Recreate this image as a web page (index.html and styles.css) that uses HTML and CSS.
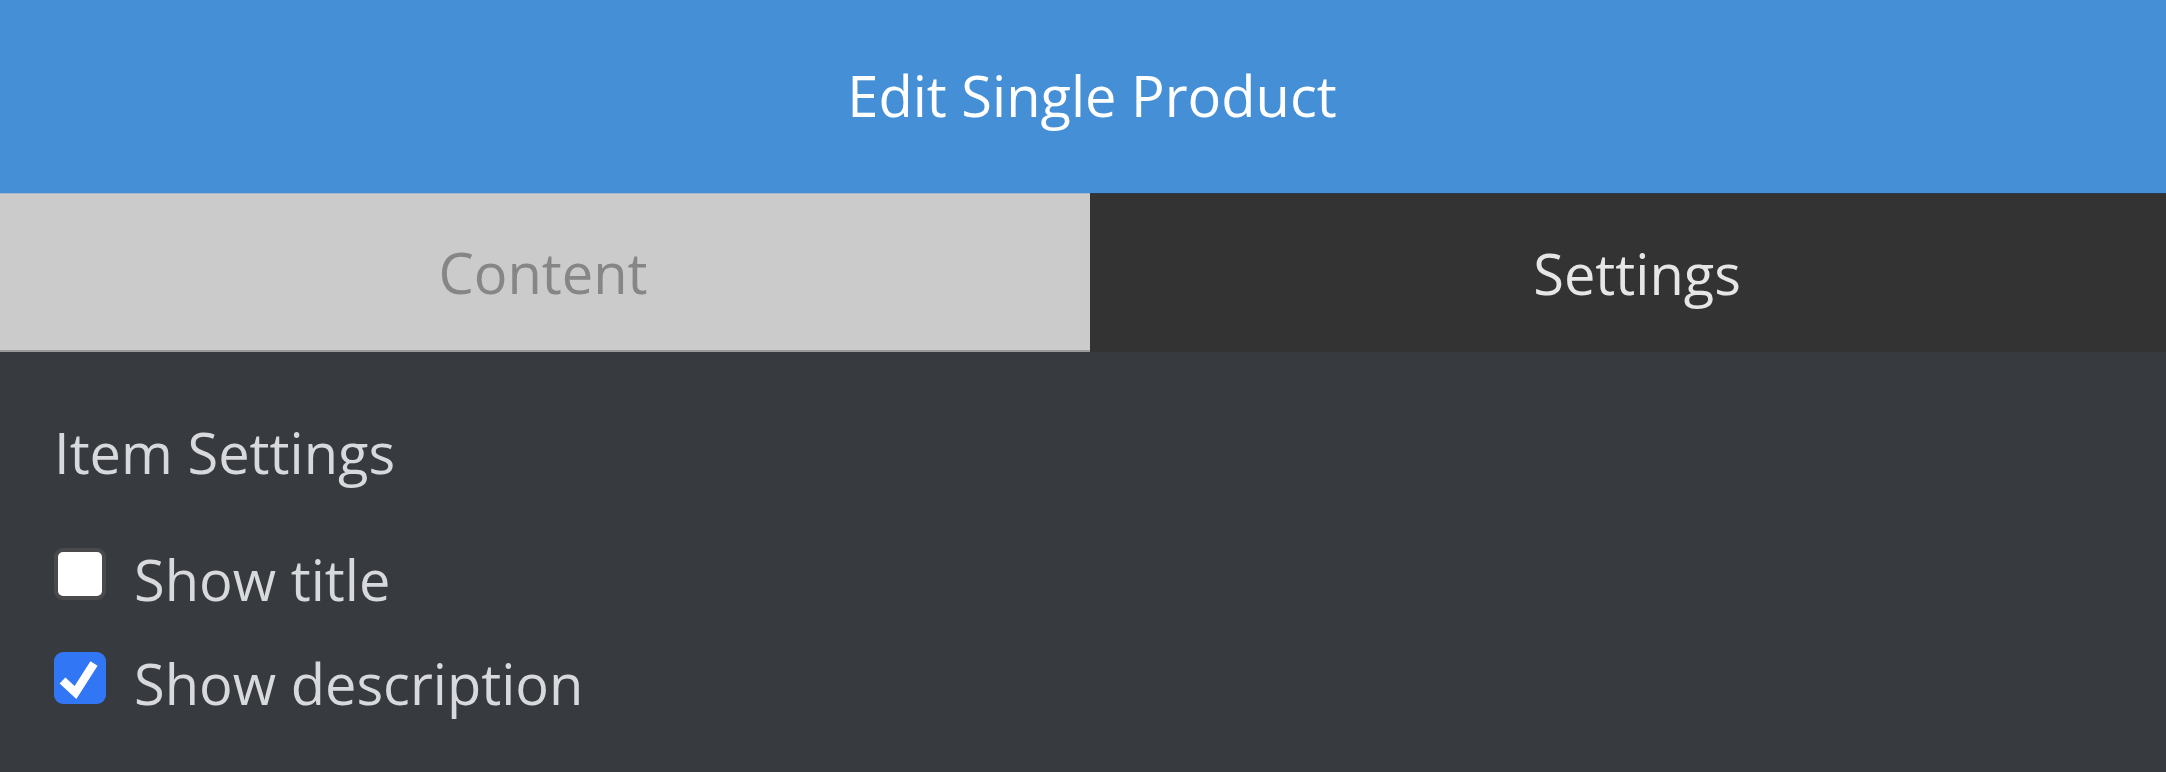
FILE: index.html
```html
<!DOCTYPE html>
<html>
<head>
<meta charset="utf-8">
<link rel="stylesheet" href="styles.css">
</head>
<body>
<header class="header"><h1 class="title">Edit Single Product</h1></header>
<nav class="tabs">
  <div class="tab tab-content">Content</div>
  <div class="tab tab-settings">Settings</div>
</nav>
<main class="panel">
  <h2 class="section-title">Item Settings</h2>
  <label class="row">
    <span class="box box-off"></span>
    <span class="label">Show title</span>
  </label>
  <label class="row">
    <span class="box box-on">
      <svg viewBox="0 0 52 52" width="52" height="52"><path d="M8.5 28.5 L21.5 40.5 L40 11.5" fill="none" stroke="#fff" stroke-width="8.5" stroke-linejoin="miter" stroke-linecap="butt"/></svg>
    </span>
    <span class="label">Show description</span>
  </label>
</main>
</body>
</html>
```
FILE: styles.css
```css
html, body {
  margin: 0;
  padding: 0;
  background: #373a3e;
  font-family: "Open Sans", "Noto Sans", sans-serif;
}
.header {
  height: 193px;
  background: #458fd6;
  display: flex;
  align-items: center;
  justify-content: center;
  padding-left: 18px;
  padding-bottom: 4px;
  box-sizing: border-box;
}
.title {
  margin: 0;
  font-weight: 400;
  font-size: 56px;
  line-height: 76px;
  color: #ffffff;
}
.tabs {
  display: flex;
  height: 159px;
}
.tab {
  display: flex;
  align-items: center;
  justify-content: center;
  font-size: 56px;
  line-height: 76px;
  box-sizing: border-box;
}
.tab-content {
  width: 1090px;
  background: #cbcbcb;
  color: #868686;
  border-top: 1px solid #a9b7c6;
  border-bottom: 2px solid #999999;
  padding-right: 4px;
}
.tab-settings {
  flex: 1;
  background: #333333;
  color: #e6e6e6;
  border-top: 1px solid #2c3a4a;
  padding-left: 18px;
}
.panel {
  padding: 62px 54px 0;
  display: flex;
  flex-direction: column;
}
.section-title {
  margin: 0 0 51px;
  font-weight: 400;
  font-size: 56px;
  line-height: 76px;
  color: #d8d9dc;
}
.row {
  display: flex;
  align-items: flex-start;
  gap: 28px;
  margin-bottom: 28px;
}
.box {
  width: 52px;
  height: 52px;
  margin-top: 7px;
  box-sizing: border-box;
  border-radius: 9px;
  flex: none;
  display: block;
}
.box svg { display: block; }
.box-off {
  background: #ffffff;
  border: 4px solid #4a4a4c;
}
.box-on {
  background: #3176f4;
}
.label {
  font-size: 56px;
  line-height: 76px;
  color: #d8d9dc;
}
```
